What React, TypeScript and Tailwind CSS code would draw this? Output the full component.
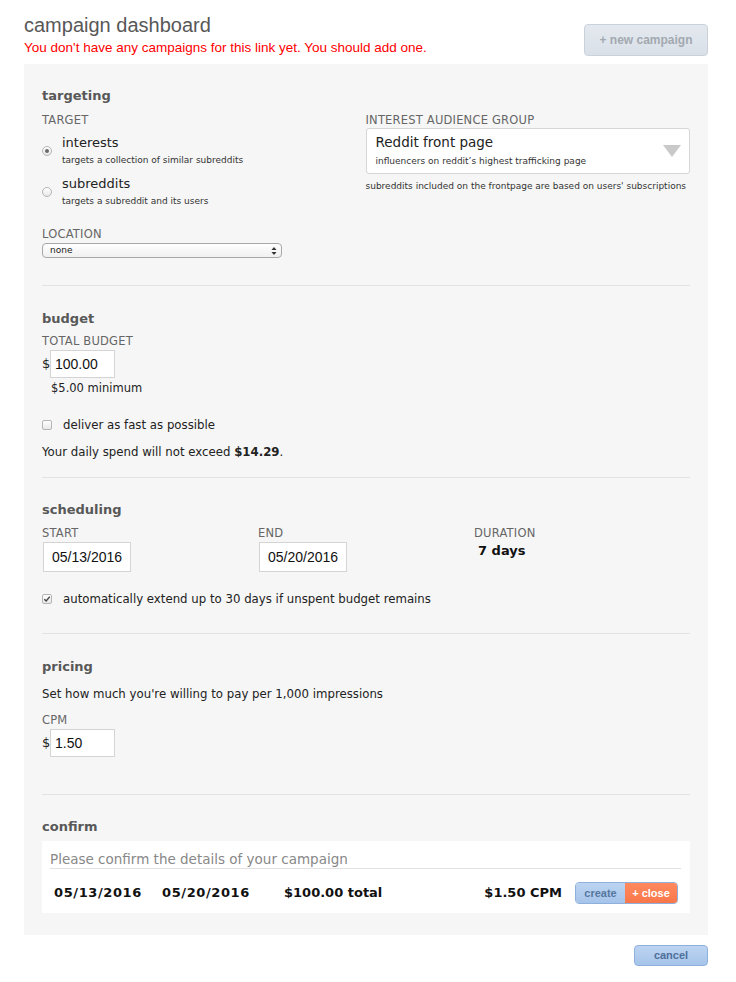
import React from 'react';

const body = "font-['DejaVu_Sans',Verdana,sans-serif]";
const arial = "font-['Liberation_Sans',Arial,sans-serif]";

const Label = ({ children }: { children: React.ReactNode }) => (
    <div className={`${body} text-[11.5px] leading-[14px] tracking-[0.2px] text-[#666] uppercase`}>{children}</div>
);

const Heading = ({ children }: { children: React.ReactNode }) => (
    <div className={`${body} text-[13px] leading-[16px] font-bold text-[#585858]`}>{children}</div>
);

const Radio = ({ checked }: { checked?: boolean }) => (
    <div className="w-[10px] h-[10px] rounded-full border border-[#b5b5b5] bg-gradient-to-b from-white to-[#e8e8e8] flex items-center justify-center shrink-0">
        {checked && <div className="w-[4px] h-[4px] rounded-full bg-[#6a6a6a]" />}
    </div>
);

const Checkbox = ({ checked }: { checked?: boolean }) => (
    <div className="w-[10px] h-[10px] rounded-[2px] border border-[#b5b5b5] bg-gradient-to-b from-white to-[#e8e8e8] flex items-center justify-center shrink-0">
        {checked && (
            <svg width="8" height="8" viewBox="0 0 8 8">
                <path d="M1.3 4.2 L3.2 6 L6.8 1.6" fill="none" stroke="#444" strokeWidth="1.4" />
            </svg>
        )}
    </div>
);

const Separator = () => <div className="h-px bg-[#e2e2e2]" />;

export default function App() {
    return (
        <div className="w-[736px] min-h-[982px] bg-white">
            {/* Header */}
            <div className="flex justify-between pl-[24px] pr-[28px] pt-[13px]">
                <div>
                    <div className={`${arial} text-[20px] leading-[24px] text-[#585858]`}>campaign dashboard</div>
                    <div className={`${arial} text-[13.5px] leading-[16px] text-[#ff0000] mt-[3px]`}>
                        You don't have any campaigns for this link yet. You should add one.
                    </div>
                </div>
                <button className={`${arial} mt-[11px] w-[124px] h-[32px] rounded-[4px] border border-[#c9d1da] bg-gradient-to-b from-[#e4e9ef] to-[#d9e0e8] text-[12px] font-bold text-[#a3a9b0]`}>
                    + new campaign
                </button>
            </div>

            {/* Panel */}
            <div className="mx-[24px] mt-[8px] w-[684px] bg-[#f6f6f6] px-[18px] pb-[22px]">
                {/* targeting */}
                <div className="pt-[24px] pb-[27px]">
                    <Heading>targeting</Heading>
                    <div className="flex mt-[9px]">
                        <div className="w-[324px]">
                            <Label>target</Label>
                            <div className="flex items-center gap-[10px] mt-[8px]">
                                <Radio checked />
                                <div>
                                    <div className={`${body} text-[13px] leading-[16px] text-[#222]`}>interests</div>
                                    <div className={`${body} text-[9px] leading-[12px] text-[#333] mt-[3px]`}>targets a collection of similar subreddits</div>
                                </div>
                            </div>
                            <div className="flex items-center gap-[10px] mt-[10px]">
                                <Radio />
                                <div>
                                    <div className={`${body} text-[13px] leading-[16px] text-[#222]`}>subreddits</div>
                                    <div className={`${body} text-[9px] leading-[12px] text-[#333] mt-[3px]`}>targets a subreddit and its users</div>
                                </div>
                            </div>
                            <div className="mt-[20px]">
                                <Label>location</Label>
                            </div>
                            <div className="mt-[2px] w-[240px] h-[15px] rounded-[4px] border border-[#a8a8a8] bg-gradient-to-b from-white to-[#f0f0f0] flex items-center justify-between pl-[7px] pr-[4px]">
                                <span className={`${body} text-[9px] text-[#222]`}>none</span>
                                <svg width="6" height="10" viewBox="0 0 6 10">
                                    <path d="M0.5 4 L3 1 L5.5 4 Z" fill="#333" />
                                    <path d="M0.5 6 L3 9 L5.5 6 Z" fill="#333" />
                                </svg>
                            </div>
                        </div>
                        <div className="w-[325px]">
                            <Label>interest audience group</Label>
                            <div className="mt-[1px] h-[46px] rounded-[3px] border border-[#d6d6d6] bg-white pl-[9px] pr-[8px] pt-[5px] flex justify-between">
                                <div>
                                    <div className={`${body} text-[13.5px] leading-[16px] text-[#222]`}>Reddit front page</div>
                                    <div className={`${body} text-[9px] leading-[12px] text-[#333] mt-[5px]`}>influencers on reddit’s highest trafficking page</div>
                                </div>
                                <svg width="18" height="12" viewBox="0 0 18 12" className="mt-[11px]">
                                    <path d="M0 0 L18 0 L9 12 Z" fill="#c9c9c9" />
                                </svg>
                            </div>
                            <div className={`${body} text-[9px] leading-[12px] text-[#333] mt-[6px]`}>
                                subreddits included on the frontpage are based on users' subscriptions
                            </div>
                        </div>
                    </div>
                </div>
                <Separator />

                {/* budget */}
                <div className="pt-[25px] pb-[18px]">
                    <Heading>budget</Heading>
                    <div className="mt-[7px]">
                        <Label>total budget</Label>
                    </div>
                    <div className="flex items-center gap-[1px] mt-[2px]">
                        <span className={`${body} text-[13px] text-[#222] w-[7px]`}>$</span>
                        <div className={`${arial} w-[65px] h-[28px] border border-[#d4d4d4] bg-white pl-[4px] flex items-center text-[14px] text-[#111]`}>100.00</div>
                    </div>
                    <div className={`${body} text-[11.5px] leading-[14px] text-[#222] ml-[9px] mt-[3px]`}>$5.00 minimum</div>
                    <div className="flex items-center gap-[11px] mt-[23px]">
                        <Checkbox />
                        <span className={`${body} text-[11.75px] leading-[14px] text-[#222]`}>deliver as fast as possible</span>
                    </div>
                    <div className={`${body} text-[11.75px] leading-[14px] text-[#222] mt-[13px]`}>
                        Your daily spend will not exceed <b>$14.29</b>.
                    </div>
                </div>
                <Separator />

                {/* scheduling */}
                <div className="pt-[24px] pb-[27px]">
                    <Heading>scheduling</Heading>
                    <div className="flex mt-[8px]">
                        <div className="w-[216px]">
                            <Label>start</Label>
                            <div className={`${arial} mt-[2px] ml-px w-[88px] h-[30px] border border-[#d4d4d4] bg-white pl-[8px] flex items-center text-[14px] text-[#111]`}>05/13/2016</div>
                        </div>
                        <div className="w-[216px]">
                            <Label>end</Label>
                            <div className={`${arial} mt-[2px] ml-px w-[88px] h-[30px] border border-[#d4d4d4] bg-white pl-[8px] flex items-center text-[14px] text-[#111]`}>05/20/2016</div>
                        </div>
                        <div>
                            <Label>duration</Label>
                            <div className={`${body} mt-[3px] ml-[4px] text-[13px] leading-[16px] font-bold text-[#111]`}>7 days</div>
                        </div>
                    </div>
                    <div className="flex items-center gap-[11px] mt-[20px]">
                        <Checkbox checked />
                        <span className={`${body} text-[11.75px] leading-[14px] text-[#222]`}>automatically extend up to 30 days if unspent budget remains</span>
                    </div>
                </div>
                <Separator />

                {/* pricing */}
                <div className="pt-[25px] pb-[37px]">
                    <Heading>pricing</Heading>
                    <div className={`${body} text-[11.75px] leading-[14px] text-[#222] mt-[12px]`}>
                        Set how much you're willing to pay per 1,000 impressions
                    </div>
                    <div className="mt-[12px]">
                        <Label>cpm</Label>
                    </div>
                    <div className="flex items-center gap-[1px] mt-[2px]">
                        <span className={`${body} text-[13px] text-[#222] w-[7px]`}>$</span>
                        <div className={`${arial} w-[65px] h-[28px] border border-[#d4d4d4] bg-white pl-[4px] flex items-center text-[14px] text-[#111]`}>1.50</div>
                    </div>
                </div>
                <Separator />

                {/* confirm */}
                <div className="pt-[24px]">
                    <Heading>confirm</Heading>
                    <div className="mt-[6px] bg-white pt-[9px] pb-[9px]">
                        <div className="mx-[8px] mr-[9px] border-b border-[#e2e2e2]">
                            <div className={`${body} text-[13.5px] leading-[18px] text-[#888]`}>Please confirm the details of your campaign</div>
                        </div>
                        <div className="flex items-center h-[22px] mt-[13px] pl-[12px] pr-[12px]">
                            <span className={`${body} text-[13px] font-bold tracking-[0.6px] text-[#111] w-[108px]`}>05/13/2016</span>
                            <span className={`${body} text-[13px] font-bold tracking-[0.6px] text-[#111] w-[122px]`}>05/20/2016</span>
                            <span className={`${body} text-[13px] font-bold text-[#111]`}>$100.00 total</span>
                            <span className={`${body} text-[13px] font-bold text-[#111] ml-auto mr-[13px]`}>$1.50 CPM</span>
                            <div className={`${arial} flex h-[22px] rounded-[4px] overflow-hidden border border-[#8fb0dc] text-[11px] font-bold`}>
                                <div className="w-[49px] flex items-center justify-center bg-gradient-to-b from-[#bcd4f1] to-[#a6c4ea] text-[#56779f]">create</div>
                                <div className="w-[52px] flex items-center justify-center bg-gradient-to-b from-[#ff8a5e] to-[#f8774a] text-white">+ close</div>
                            </div>
                        </div>
                    </div>
                </div>
            </div>

            {/* footer */}
            <div className="flex justify-end pr-[28px] mt-[10px]">
                <button className={`${arial} w-[74px] h-[21px] rounded-[4px] border border-[#8fb0dc] bg-gradient-to-b from-[#bcd4f1] to-[#a6c4ea] text-[11px] font-bold text-[#4e6f9a]`}>
                    cancel
                </button>
            </div>
        </div>
    );
}
